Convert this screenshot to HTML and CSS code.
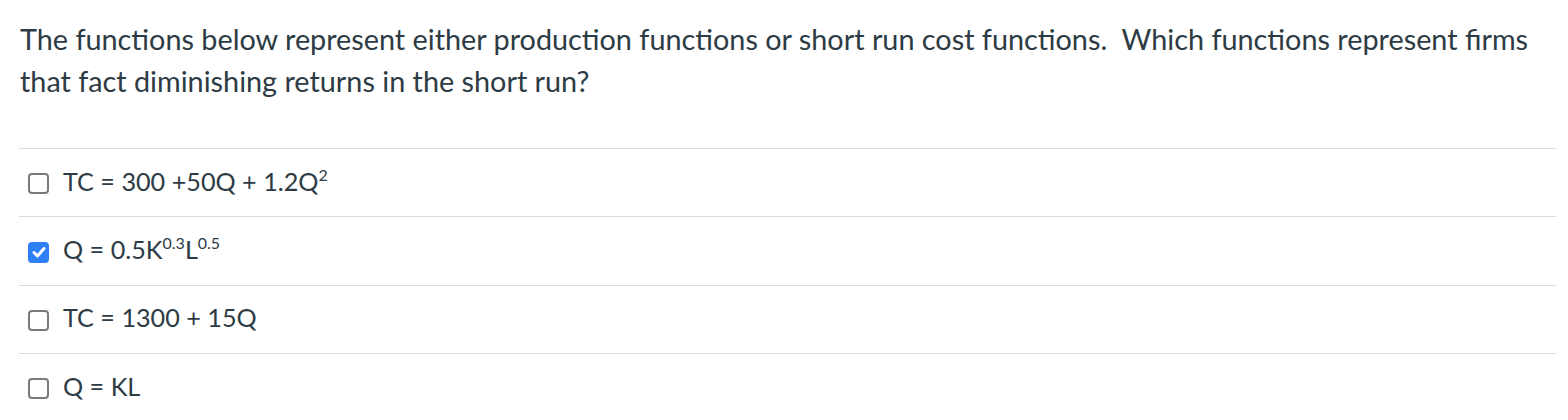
FILE: index.html
```html
<!DOCTYPE html>
<html>
<head>
<meta charset="utf-8">
<link rel="stylesheet" href="styles.css">
</head>
<body>
<div class="question">
  <p class="prompt">The functions below represent either production functions or short run cost functions.&nbsp; Which functions represent firms that fact diminishing returns in the short run?</p>
  <div class="answers">
    <label class="answer">
      <span class="box"></span>
      <span class="text">TC = 300 +50Q + 1.2Q<sup>2</sup></span>
    </label>
    <label class="answer">
      <span class="box checked"><svg viewBox="0 0 20 20" width="20" height="20"><path d="M5 10.5 L8.5 14 L15 6.5" fill="none" stroke="#fff" stroke-width="3" stroke-linecap="round" stroke-linejoin="round"/></svg></span>
      <span class="text">Q = 0.5K<sup>0.3</sup>L<sup>0.5</sup></span>
    </label>
    <label class="answer">
      <span class="box"></span>
      <span class="text">TC = 1300 + 15Q</span>
    </label>
    <label class="answer">
      <span class="box"></span>
      <span class="text">Q = KL</span>
    </label>
  </div>
</div>
</body>
</html>
```
FILE: styles.css
```css
html, body {
  margin: 0;
  padding: 0;
  background: #fff;
}
body {
  font-family: Lato, "Noto Sans", sans-serif;
  color: #2d3b45;
}
.question {
  padding: 18px 12px 0 19px;
}
.prompt {
  margin: 0 0 46px 1px;
  font-size: 28.8px;
  line-height: 42px;
}
.answers {
  display: flex;
  flex-direction: column;
}
.answer {
  box-sizing: border-box;
  display: flex;
  align-items: center;
  gap: 14px;
  height: 68.4px;
  border-top: 1px solid #dcdcdc;
  padding-left: 9px;
  font-size: 25.2px;
}
.box {
  box-sizing: border-box;
  width: 21px;
  height: 21px;
  margin-top: 2px;
  border: 2px solid #7a7a7a;
  border-radius: 4px;
  display: flex;
  align-items: center;
  justify-content: center;
  flex: none;
}
.box.checked {
  border: none;
  background: #2f7ff6;
}
.text {
  margin-bottom: 4px;
}
.text sup {
  font-size: 16px;
  line-height: 0;
  vertical-align: 10px;
}
```
